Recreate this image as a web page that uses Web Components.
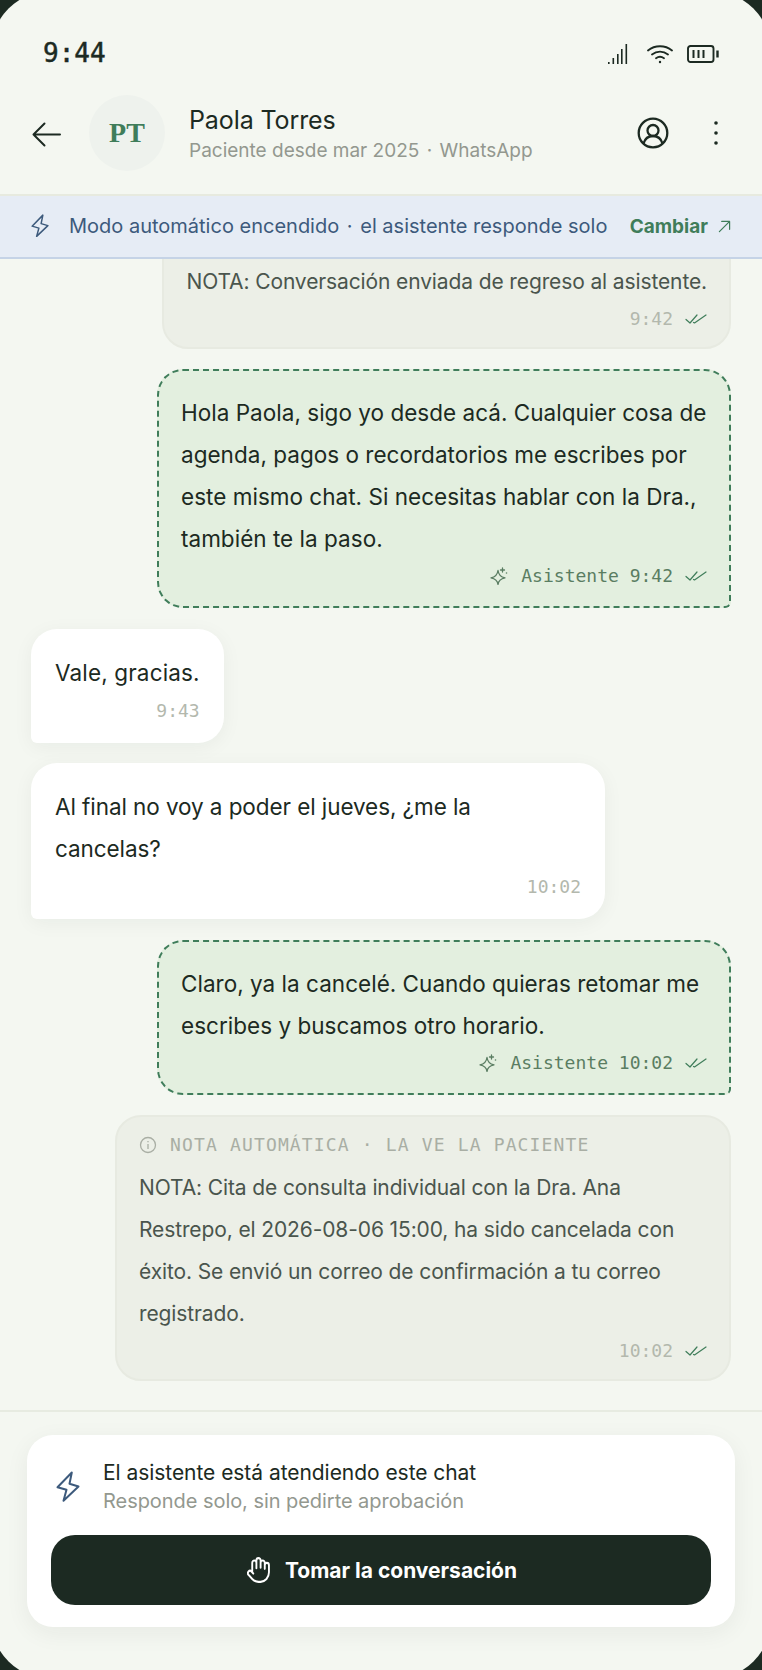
<!doctype html>
<html lang="es">
<head>
<meta charset="utf-8">
<title>Paola Torres</title>
<style>
  html, body { margin: 0; height: 100%; background: #1c2a22; }
  body { font-family: Inter, "Noto Sans", sans-serif; color: #1c2a22; }
</style>
</head>
<body>
<phone-screen>
  <status-bar slot="top" time="9:44"></status-bar>
  <chat-header slot="top" name="Paola Torres" initials="PT">Paciente desde mar 2025 <span style="margin:0 2px">·</span> WhatsApp</chat-header>
  <mode-banner slot="top">Modo automático encendido <span style="margin:0 2px">·</span> el asistente responde solo</mode-banner>

  <chat-bubble kind="note" time="9:42" read style="padding-top:60px">NOTA: Conversación enviada de regreso al asistente.</chat-bubble>
  <chat-bubble kind="bot" time="9:42" read>Hola Paola, sigo yo desde acá. Cualquier cosa de agenda, pagos o recordatorios me escribes por este mismo chat. Si necesitas hablar con la Dra., también te la paso.</chat-bubble>
  <chat-bubble kind="in" time="9:43" style="letter-spacing:.15px">Vale, gracias.</chat-bubble>
  <chat-bubble kind="in" time="10:02">Al final no voy a poder el jueves, ¿me la cancelas?</chat-bubble>
  <chat-bubble kind="bot" time="10:02" read>Claro, ya la cancelé. Cuando quieras retomar me escribes y buscamos otro horario.</chat-bubble>
  <chat-bubble kind="note" time="10:02" read label="NOTA AUTOMÁTICA · LA VE LA PACIENTE">NOTA: Cita de consulta individual con la Dra. Ana<br>Restrepo, el 2026-08-06 15:00, ha sido cancelada con éxito. Se envió un correo de confirmación a tu correo registrado.</chat-bubble>

  <takeover-card slot="bottom"></takeover-card>
</phone-screen>

<script>
const MONO = '"DejaVu Sans Mono", "Liberation Mono", monospace';

const bolt = (w, h, color, sw) => `<svg width="${w}" height="${h}" viewBox="0 0 24 32" fill="none" stroke="${color}" stroke-width="${sw}" stroke-linejoin="round" stroke-linecap="round"><path d="M15.8 1.5 1.5 16.2l9 2.6-3 11 15-14.300-9-2.700z"/></svg>`;
const checks = `<svg width="22" height="12" viewBox="0 0 22 12" fill="none" stroke="#3f7d5a" stroke-width="1.2" stroke-linecap="round" stroke-linejoin="round"><path d="M1 6.5 5 10l7-8M8.500 9.500l1 .5L21 2"/></svg>`;

class PhoneScreen extends HTMLElement {
	constructor() {
		super();
		this.attachShadow({ mode: "open" });
		this.shadowRoot.innerHTML = `
			<style>
				:host {
					display: flex;
					flex-direction: column;
					width: 762px;
					height: 1670px;
					background: #f4f7f1;
					clip-path: inset(-9px round 60px);
				}
				#chat {
					flex: 1;
					min-height: 0;
					overflow: hidden;
					display: flex;
					flex-direction: column;
					justify-content: flex-end;
					gap: 20.4px;
					padding: 0 31px 29px;
				}
				#bottom {
					border-top: 2px solid #e7ebe1;
					padding: 23px 27px 43px;
				}
			</style>
			<slot name="top"></slot>
			<div id="chat"><slot></slot></div>
			<div id="bottom"><slot name="bottom"></slot></div>
		`;
	}
}

class StatusBar extends HTMLElement {
	connectedCallback() {
		this.attachShadow({ mode: "open" });
		this.shadowRoot.innerHTML = `
			<style>
				:host {
					display: flex;
					align-items: center;
					justify-content: space-between;
					height: 70px;
					padding: 36px 43px 0 43px;
					box-sizing: border-box;
				}
				span {
					font: 400 26px ${MONO};
					-webkit-text-stroke: .5px #1c2a22;
					color: #1c2a22;
				}
				div { display: flex; align-items: center; gap: 14px; margin-top: 2px; }
				svg { display: block; }
				#signal { margin-right: 5px; }
			</style>
			<span>${this.getAttribute("time")}</span>
			<div>
				<svg id="signal" width="20" height="22" viewBox="0 0 20 22" fill="#1c2a22"><rect x="0" y="19" width="1.6" height="2"/><rect x="4.5" y="15" width="1.6" height="6"/><rect x="9" y="11" width="1.6" height="10"/><rect x="13" y="6" width="1.6" height="15"/><rect x="17.5" y="1" width="1.6" height="20"/></svg>
				<svg width="26" height="20" viewBox="0 0 26 20" fill="none" stroke="#1c2a22" stroke-width="1.8" stroke-linecap="round"><path d="M1 6.500C8 .8 18 .8 25 6.500M5 10.500c4.800-3.800 11.200-3.800 16 0M9 14.200c2.500-1.800 5.500-1.800 8 0"/><circle cx="13" cy="18" r="1.200" fill="#1c2a22" stroke="none"/></svg>
				<svg width="32" height="18" viewBox="0 0 32 18" fill="none" stroke="#1c2a22"><rect x="1" y="1" width="25.500" height="16" rx="2.500" stroke-width="1.900"/><path d="M6.500 5v8M11.500 5v8M16.500 5v8" stroke-width="2"/><path d="M30.500 5.500v7" stroke-width="2.400"/></svg>
			</div>
		`;
	}
}

class ChatHeader extends HTMLElement {
	connectedCallback() {
		this.attachShadow({ mode: "open" });
		this.shadowRoot.innerHTML = `
			<style>
				:host {
					display: flex;
					align-items: center;
					height: 126px;
					padding: 2px 43px 0 32px;
					box-sizing: border-box;
					border-bottom: 2px solid #e7eadf;
				}
				svg { display: block; flex: none; }
				#back { margin-top: 2px; }
				#avatar {
					width: 76px;
					height: 76px;
					flex: none;
					margin-left: 28px;
					border-radius: 50%;
					background: #eef2ed;
					display: flex;
					align-items: center;
					justify-content: center;
					font: 700 28px "Liberation Serif", serif;
					color: #3f7d5a;
				}
				#info { flex: 1; margin-left: 24px; margin-top: 2px; }
				#name { font-size: 25px; line-height: 32px; letter-spacing: -.1px; color: #1c2a22; }
				#sub { font-size: 19px; line-height: 26px; margin-top: 2px; color: #93988f; }
				#menu { margin-left: 44px; }
			</style>
			<svg id="back" width="29" height="25" viewBox="0 0 29 25" fill="none" stroke="#1c2a22" stroke-width="2" stroke-linecap="round" stroke-linejoin="round"><path d="M28 12.500H1.500M12.500 1.500l-11 11 11 11"/></svg>
			<div id="avatar">${this.getAttribute("initials")}</div>
			<div id="info">
				<div id="name">${this.getAttribute("name")}</div>
				<div id="sub"><slot></slot></div>
			</div>
			<svg width="32" height="32" viewBox="0 0 32 32" fill="none" stroke="#1c2a22" stroke-width="2.300"><circle cx="16" cy="16" r="14.300"/><circle cx="16" cy="13.500" r="5.500"/><path d="M6.500 26.500c1.500-5 5-7.500 9.500-7.500s8 2.500 9.500 7.500"/></svg>
			<svg id="menu" width="6" height="24" viewBox="0 0 6 24" fill="#1c2a22"><circle cx="3" cy="2" r="1.800"/><circle cx="3" cy="12" r="1.800"/><circle cx="3" cy="22" r="1.800"/></svg>
		`;
	}
}

class ModeBanner extends HTMLElement {
	connectedCallback() {
		this.attachShadow({ mode: "open" });
		this.shadowRoot.innerHTML = `
			<style>
				:host {
					display: flex;
					align-items: center;
					height: 63px;
					padding: 0 31px 1px 31px;
					box-sizing: border-box;
					background: #e6ecf5;
					border-bottom: 2px solid #c5d3e6;
					font-size: 20px;
					color: #3d5a7c;
				}
				svg { display: block; flex: none; }
				#text { flex: 1; margin-left: 20px; white-space: nowrap; }
				b { color: #3f7d5a; font-weight: 700; font-size: 19px; margin-right: 10px; }
			</style>
			${bolt(18, 24, "#3d5a7c", 2)}
			<span id="text"><slot></slot></span>
			<b>Cambiar</b>
			<svg width="13" height="13" viewBox="0 0 14 14" fill="none" stroke="#3f7d5a" stroke-width="1.300" stroke-linecap="round" stroke-linejoin="round"><path d="M1.500 12.500 12.500 1.500M4 1.500h8.500V10"/></svg>
		`;
	}
}

class ChatBubble extends HTMLElement {
	connectedCallback() {
		const kind = this.getAttribute("kind");
		const label = this.getAttribute("label");
		const time = this.getAttribute("time");
		const sparkle = kind === "bot" ? `<svg id="spark" width="18" height="18" viewBox="0 0 18 18" fill="none" stroke="#5a7d62" stroke-width="1.300" stroke-linejoin="round"><path d="M8 3.500c.5 4 2.500 6.500 7 7.300-4.500.8-6.500 2.800-7 6.700-.5-3.900-2.500-5.900-7-6.700 4.500-.8 6.500-3.300 7-7.300z"/><path d="M12.500 1v4M10.500 3h4" stroke-linecap="round"/><circle cx="16.500" cy="6" r=".8" fill="#5a7d62" stroke="none"/></svg>` : "";
		this.attachShadow({ mode: "open" });
		this.shadowRoot.innerHTML = `
			<style>
				:host {
					display: block;
					flex: none;
					box-sizing: border-box;
					width: fit-content;
					max-width: 574px;
					padding: 23px 24px 20px;
					border-radius: 26px;
					font-size: 22.5px;
					letter-spacing: -.08px;
					line-height: 42px;
					color: #1c2a22;
				}
				:host([kind="in"]) {
					background: #fff;
					border-bottom-left-radius: 6px;
					box-shadow: 0 4px 20px rgba(28, 42, 34, .05);
				}
				:host([kind="bot"]) {
					align-self: flex-end;
					background: #e3efdf;
					border: 2px dashed #3f7d5a;
					border-bottom-right-radius: 6px;
					padding: 21px 22px 18px;
					letter-spacing: .02px;
				}
				:host([kind="note"]) {
					align-self: flex-end;
					background: #ecefe7;
					border: 2px solid #e7eae1;
					max-width: 616px;
					padding: 14px 22px 16px;
					font-size: 21px;
					letter-spacing: -.12px;
					color: #4a554d;
				}
				#label {
					display: flex;
					align-items: center;
					gap: 13px;
					font: 18px/28px ${MONO};
					letter-spacing: 1.15px;
					color: #a9aea4;
					margin-bottom: 8px;
				}
				svg { display: block; flex: none; }
				#meta {
					display: flex;
					align-items: center;
					justify-content: flex-end;
					font: 18px/24px ${MONO};
					letter-spacing: 0;
					color: #b3b8ad;
					margin-top: 4px;
				}
				:host([kind="in"]) #meta { line-height: 25px; }
				:host([kind="bot"]) #meta { color: #5a7d62; }
				#spark { margin-right: 13px; }
				#check { margin-left: 12px; }
			</style>
			${label ? `<div id="label"><svg width="18" height="18" viewBox="0 0 18 18" fill="none" stroke="#a9aea4" stroke-width="1.300"><circle cx="9" cy="9" r="7.500"/><path d="M9 8v5M9 5v1.200"/></svg>${label}</div>` : ""}
			<div><slot></slot></div>
			<div id="meta">${sparkle}<span>${kind === "bot" ? "Asistente " + time : time}</span>${this.hasAttribute("read") ? `<span id="check">${checks}</span>` : ""}</div>
		`;
	}
}

class TakeoverCard extends HTMLElement {
	connectedCallback() {
		this.attachShadow({ mode: "open" });
		this.shadowRoot.innerHTML = `
			<style>
				:host {
					display: block;
					background: #fff;
					border-radius: 26px;
					padding: 24px 24px 22px;
					box-shadow: 0 6px 24px rgba(28, 42, 34, .06);
				}
				#row { display: flex; align-items: center; gap: 23px; padding-left: 5px; }
				svg { display: block; flex: none; }
				#title { font-size: 21px; line-height: 28px; letter-spacing: -.05px; color: #1c2a22; }
				#sub { font-size: 20px; line-height: 28px; letter-spacing: -.05px; color: #93988f; }
				button {
					display: flex;
					align-items: center;
					justify-content: center;
					gap: 15px;
					width: 100%;
					height: 70px;
					margin-top: 20px;
					padding: 0 0 0 2px;
					border: 0;
					border-radius: 24px;
					background: #1c2a22;
					color: #fff;
					font: 700 21px Inter, sans-serif;
				}
			</style>
			<div id="row">
				${bolt(24, 32, "#3d5a7c", 2)}
				<div>
					<div id="title">El asistente está atendiendo este chat</div>
					<div id="sub">Responde solo, sin pedirte aprobación</div>
				</div>
			</div>
			<button>
				<svg width="23" height="26" viewBox="1 1 22 22" preserveAspectRatio="none" fill="none" stroke="#fff" stroke-width="1.800" stroke-linecap="round" stroke-linejoin="round"><path d="M18 11V6a2 2 0 0 0-4 0M14 10V4a2 2 0 0 0-4 0v2M10 10.500V6a2 2 0 0 0-4 0v8M18 8a2 2 0 1 1 4 0v6a8 8 0 0 1-8 8h-2c-2.800 0-4.500-.860-5.990-2.340l-3.600-3.600a2 2 0 0 1 2.830-2.820L7 15"/></svg>
				Tomar la conversación
			</button>
		`;
	}
}

customElements.define("phone-screen", PhoneScreen);
customElements.define("status-bar", StatusBar);
customElements.define("chat-header", ChatHeader);
customElements.define("mode-banner", ModeBanner);
customElements.define("chat-bubble", ChatBubble);
customElements.define("takeover-card", TakeoverCard);
</script>
</body>
</html>
